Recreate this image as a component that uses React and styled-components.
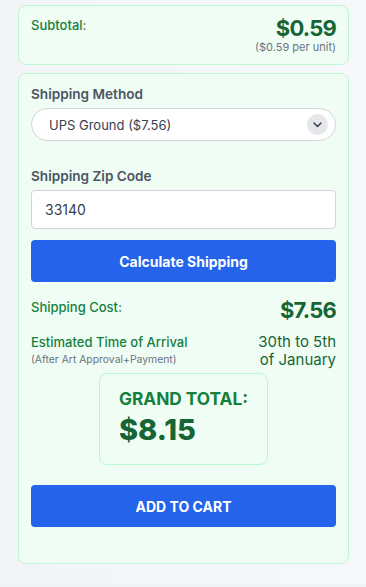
import React from "react";
import styled, { createGlobalStyle } from "styled-components";

const Global = createGlobalStyle`
  html, body { margin: 0; padding: 0; background: #f1f2f5; }
  body { font-family: Inter, "Noto Sans", sans-serif; }
  * { box-sizing: border-box; }
`;

const Page = styled.div`
  min-height: 584px;
  background: linear-gradient(90deg, #f3f4f7 0%, #f6f8fc 100%);
  padding: 5px 17px 0 18px;
`;

const Card = styled.section`
  background: #f0fdf4;
  border: 1px solid #bbf7d0;
  border-radius: 8px;
  padding: ${(p) => p.$pad || "12px"};
  margin-bottom: 8px;
`;

const Row = styled.div`
  display: flex;
  justify-content: space-between;
  align-items: flex-start;
  margin-top: ${(p) => p.$mt || 0}px;
`;

const GreenLabel = styled.div`
  font-size: 13px;
  line-height: 18px;
  color: #15803d;
  font-weight: 450;
`;

const Price = styled.div`
  font-size: 22px;
  line-height: 24px;
  font-weight: 700;
  letter-spacing: -0.8px;
  color: #166534;
  text-align: right;
`;

const Note = styled.div`
  font-size: 11px;
  line-height: 14px;
  color: #6b7280;
  text-align: right;
`;

const Label = styled.div`
  font-size: 13.6px;
  line-height: 17px;
  font-weight: 600;
  color: #4b5563;
  margin-top: ${(p) => p.$mt || 0}px;
  margin-bottom: 5px;
`;

const SelectBox = styled.div`
  height: 33px;
  border: 1px solid #d1d5db;
  border-radius: 999px;
  background: #fff;
  display: flex;
  align-items: center;
  justify-content: space-between;
  padding: 0 7px 0 17px;
  font-size: 13px;
  color: #374151;
`;

const Chevron = styled.span`
  width: 21px;
  height: 21px;
  border-radius: 50%;
  background: #e5e7eb;
  display: flex;
  align-items: center;
  justify-content: center;
`;

const Input = styled.div`
  height: 39px;
  border: 1px solid #d1d5db;
  border-radius: 4px;
  background: #fff;
  display: flex;
  align-items: center;
  padding: 0 13px;
  font-size: 14px;
  color: #374151;
`;

const Button = styled.button`
  display: block;
  width: 100%;
  height: 42px;
  border: none;
  border-radius: 4px;
  background: #2563eb;
  color: #fff;
  font-family: Inter, "Noto Sans", sans-serif;
  font-size: 14px;
  font-weight: 700;
  margin-top: ${(p) => p.$mt || 0}px;
  margin-bottom: ${(p) => p.$mb || 0}px;
`;

const SubNote = styled.div`
  font-size: 10.4px;
  line-height: 14px;
  color: #6b7280;
  margin-top: 2px;
`;

const Eta = styled.div`
  font-size: 15px;
  line-height: 17.5px;
  color: #166534;
  text-align: right;
`;

const TotalBox = styled.div`
  border: 1px solid #bbf7d0;
  border-radius: 8px;
  padding: 14px 19px 17px;
  margin: 5px auto 20px;
  width: fit-content;
`;

const TotalLabel = styled.div`
  font-size: 17.3px;
  line-height: 22px;
  font-weight: 700;
  color: #15803d;
`;

const TotalValue = styled.div`
  font-size: 29px;
  line-height: 34px;
  font-weight: 800;
  color: #166534;
  margin-top: 3px;
`;

export default function App() {
  return (
    <>
      <Global />
      <Page>
        <Card $pad="10px 12px">
          <Row>
            <GreenLabel>Subtotal:</GreenLabel>
            <div>
              <Price>$0.59</Price>
              <Note>($0.59 per unit)</Note>
            </div>
          </Row>
        </Card>
        <Card $pad="12px 12px 36px">
          <Label>Shipping Method</Label>
          <SelectBox>
            <span>UPS Ground ($7.56)</span>
            <Chevron>
              <svg width="9" height="6" viewBox="0 0 9 6">
                <path d="M1 1l3.5 3.5L8 1" fill="none" stroke="#374151" strokeWidth="1.5" strokeLinecap="round" strokeLinejoin="round" />
              </svg>
            </Chevron>
          </SelectBox>
          <Label $mt={27}>Shipping Zip Code</Label>
          <Input>33140</Input>
          <Button $mt={11}>Calculate Shipping</Button>
          <Row $mt={16}>
            <GreenLabel>Shipping Cost:</GreenLabel>
            <Price>$7.56</Price>
          </Row>
          <Row $mt={11}>
            <div>
              <GreenLabel>Estimated Time of Arrival</GreenLabel>
              <SubNote>(After Art Approval+Payment)</SubNote>
            </div>
            <Eta>
              30th to 5th
              <br />
              of January
            </Eta>
          </Row>
          <TotalBox>
            <TotalLabel>GRAND TOTAL:</TotalLabel>
            <TotalValue>$8.15</TotalValue>
          </TotalBox>
          <Button>ADD TO CART</Button>
        </Card>
      </Page>
    </>
  );
}
